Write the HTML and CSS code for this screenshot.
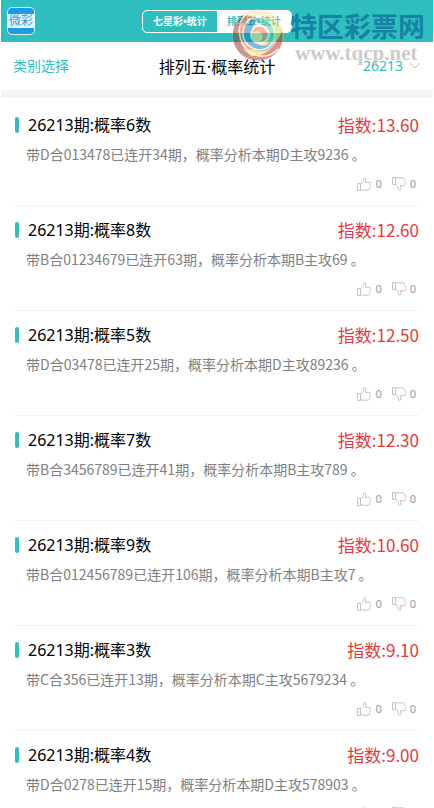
FILE: index.html
```
<!DOCTYPE html>
<html lang="zh-CN">
<head>
    <meta charset="utf-8">
    <meta name="viewport" content="width=device-width, initial-scale=1">
    <title>排列五·概率统计</title>
    <link rel="stylesheet" href="styles.css">
</head>
<body>
    <svg width="0" height="0" class="defs" aria-hidden="true">
        <symbol id="thumb" viewBox="0 0 14 14">
            <path d="M.5 6.5h3v7h-3zM3.5 7L6 4.5C6.6 3.700 6.200 2 6.700 1 7.300.2 8.700.5 8.900 2 9 3.200 8.500 4 8.300 5.300h4c1.500 0 1.600 1.500.8 2 .6.600.5 1.500-.2 1.900.4.700.2 1.500-.5 1.800.3 1-.1 2.200-1.300 2.200H5.500l-2-.7"/>
        </symbol>
    </svg>
    <header class="top">
        <a href="#" class="logo"><span>微彩</span></a>
        <nav class="tabs">
            <a href="#">七星彩•统计</a>
            <a href="#" class="active">排列五•统计</a>
        </nav>
    </header>
    <div class="bar">
        <button type="button" class="type">类别选择</button>
        <h1>排列五·概率统计</h1>
        <button type="button" class="issue">26213
            <svg width="12" height="8" viewBox="0 0 12 8"><path d="M1 1l5 5 5-5"/></svg>
        </button>
    </div>
    <main class="list"></main>

    <div class="watermark">
        <svg width="52" height="52" viewBox="0 0 52 52">
            <circle cx="26" cy="26" r="25.500" fill="#f8dcae"/>
            <path d="M12 5C2 12-2 25 3 37c5 10 14 15 25 14C15 47 8 37 8 26 8 17 10 10 12 5z" fill="#8f2f26"/>
            <path d="M16 4C7 11 4 22 8 32c3 9 11 16 23 16-9-4-15-12-16-20-1-9 2-16 9-19-4-2-7-3-8-5z" fill="#f25a28"/>
            <path d="M13 5C22-2 37-1 45 9c4 5 6 10 6 15C46 15 39 10 31 9c-8-2-14-1-18-4z" fill="#fbe4a8"/>
            <path d="M24 7c12-1 22 5 27 17 1 9-3 17-8 21 2-12 0-22-7-29-4-4-8-7-12-9z" fill="#cfdc50"/>
            <path d="M50 22c3 13-5 27-20 29-8 1-15-2-19-5 12 3 22 0 29-8 5-6 8-11 10-16z" fill="#cc2614"/>
            <path d="M44 25c-1 12-9 21-22 21-5-1-8-3-11-6 10 2 18-1 23-7 4-5 7-7 10-8z" fill="#fbd516"/>
            <path d="M31 9C19 8 11 16 12 27c1 9 8 15 17 15 8 0 14-6 14-14-3 7-9 10-15 8-7-2-10-8-8-15 1-6 5-10 11-12z" fill="#007ac0"/>
            <path d="M21 13c10-5 20 1 21 11 0 6-3 11-8 13 3-7 3-14-1-18-3-4-7-6-12-6z" fill="#4cc4a8"/>
            <circle cx="27" cy="26" r="9" fill="#fbe08e"/>
            <path d="M19 25c1-8 11-10 15-3 3 6-1 11-6 11 3-3 4-7 1-9-3-3-7-2-10 1z" fill="#ef7440"/>
            <g fill="none" stroke="#fff8e4" stroke-width="1.500">
                <path d="M14 5C4 15 5 33 18 43c8 6 20 6 28-3M22 8C9 13 7 31 19 38c9 6 20 2 24-9M24 7c12 1 20 10 19 21M20 28c-3-9 8-16 15-8 5 7 0 14-7 14"/>
            </g>
        </svg>
        <div class="mark">
            <strong>特区彩票网</strong>
            <span>www.tqcp.net</span>
        </div>
    </div>

    <script>
        var rows = [
            ['6', '13.60', '带D合013478已连开34期，概率分析本期D主攻9236 。'],
            ['8', '12.60', '带B合01234679已连开63期，概率分析本期B主攻69 。'],
            ['5', '12.50', '带D合03478已连开25期，概率分析本期D主攻89236 。'],
            ['7', '12.30', '带B合3456789已连开41期，概率分析本期B主攻789 。'],
            ['9', '10.60', '带B合012456789已连开106期，概率分析本期B主攻7 。'],
            ['3', '9.10', '带C合356已连开13期，概率分析本期C主攻5679234 。'],
            ['4', '9.00', '带D合0278已连开15期，概率分析本期D主攻578903 。']
        ];
        var thumb = '<svg width="14" height="14"><use href="#thumb"/></svg>';
        document.querySelector('.list').innerHTML = rows.map(function(r) {
            return '<article class="item">' +
                '<div class="head"><h2>26213期:概率' + r[0] + '数</h2><span class="score">指数:' + r[1] + '</span></div>' +
                '<p>' + r[2] + '</p>' +
                '<div class="votes">' +
                '<button type="button" aria-label="赞">' + thumb + '0</button>' +
                '<button type="button" class="down" aria-label="踩">' + thumb + '0</button>' +
                '</div></article>';
        }).join('');
    </script>
</body>
</html>
```
FILE: styles.css
```
* {
    box-sizing: border-box;
}
body {
    margin: 0;
    padding: 0 1px;
    position: relative;
    height: 100vh;
    overflow: hidden;
    background: #fff;
    color: #000;
    font-family: "Noto Sans", "Noto Sans CJK SC", sans-serif;
    font-size: 16px;
}
a {
    text-decoration: none;
}
button {
    padding: 0;
    border: 0;
    background: none;
    font-family: inherit;
}
h1, h2, p {
    margin: 0;
    font-weight: normal;
}
.defs {
    position: absolute;
}
.top {
    display: grid;
    grid-template-columns: 1fr auto 1fr;
    align-items: center;
    height: 42px;
    padding: 0 6px;
    background: #30bfbf;
}
.logo {
    display: flex;
    align-items: center;
    width: 28px;
    height: 28px;
    border: 1px solid #e4f6fb;
    border-radius: 5px;
    background: #189ce8;
}
.logo span {
    flex: 1;
    background: #e8f6ff;
    color: #189ce8;
    font-size: 12px;
    line-height: 14px;
    text-align: center;
}
.tabs {
    display: flex;
    border: 1px solid #fff;
    border-radius: 5px;
    overflow: hidden;
}
.tabs a {
    width: 74px;
    color: #fff;
    font-size: 10px;
    font-weight: bold;
    line-height: 21px;
    text-align: center;
}
.tabs .active {
    background: #fff;
    color: #30bfbf;
}
.bar {
    display: grid;
    grid-template-columns: 1fr auto 1fr;
    align-items: center;
    height: 56px;
    padding: 0 12px;
    border-bottom: 8px solid #f4f4f4;
}
.bar h1 {
    font-size: 16px;
    line-height: 24px;
    padding-top: 2px;
}
.bar button {
    color: #30bfbf;
    font-size: 14px;
    line-height: 24px;
}
.bar .type {
    justify-self: start;
}
.bar .issue {
    display: flex;
    align-items: center;
    gap: 6px;
    justify-self: end;
}
.issue svg {
    fill: none;
    stroke: #9cc;
}
.list {
    padding: 3px 14px 0;
}
.item {
    height: 105px;
    padding-top: 12px;
    border-bottom: 1px solid #f2f2f2;
}
.head {
    display: flex;
    align-items: center;
    justify-content: space-between;
    height: 24px;
}
.head h2 {
    display: flex;
    align-items: center;
    gap: 9px;
    font-size: 16px;
    line-height: 24px;
}
.head h2::before {
    content: "";
    width: 4px;
    height: 16px;
    border-radius: 2px;
    background: #30bfbf;
}
.score {
    color: #e4393c;
    font-size: 17px;
    line-height: 24px;
}
.score, .item p {
    font-family: "Noto Sans CJK SC", sans-serif;
}
.item p {
    padding: 7px 0 0 11px;
    color: #808080;
    font-size: 14px;
    line-height: 20px;
    white-space: nowrap;
}
.votes {
    display: flex;
    justify-content: flex-end;
    gap: 10px;
    padding: 12px 3px 0 0;
}
.votes button {
    display: flex;
    align-items: center;
    gap: 4px;
    color: #999;
    font-size: 11px;
    line-height: 16px;
}
.votes svg {
    fill: none;
    stroke: #c4c4c4;
}
.down svg {
    transform: rotate(180deg) scaleX(-1);
}
.watermark {
    position: absolute;
    top: 9px;
    right: 9px;
    display: flex;
    gap: 6px;
    pointer-events: none;
}
.watermark > svg {
    opacity: 0.5;
}
.mark {
    display: flex;
    flex-direction: column;
    padding-top: 4px;
}
.mark strong {
    color: #1683a4;
    font-size: 27px;
    line-height: 28px;
}
.mark span {
    padding: 1px 0 0 5px;
    color: #bbb;
    opacity: 0.75;
    font: bold 21px/22px "Liberation Serif", serif;
}
```
